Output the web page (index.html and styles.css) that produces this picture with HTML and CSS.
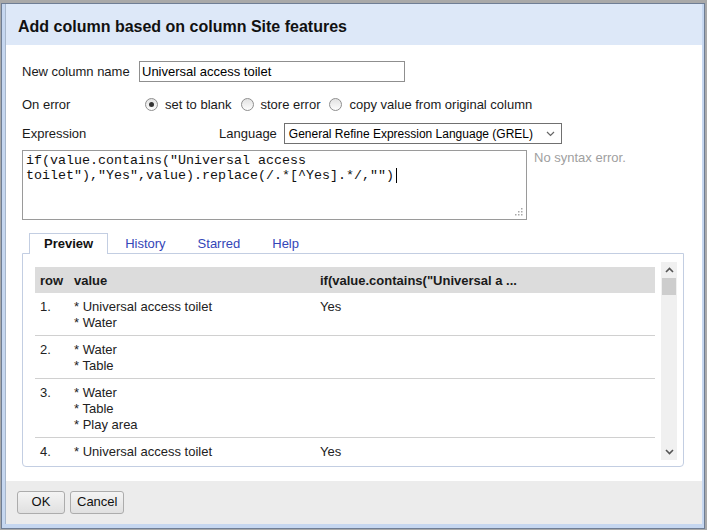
FILE: index.html
```html
<!DOCTYPE html>
<html>
<head>
<meta charset="utf-8">
<link rel="stylesheet" href="styles.css">
</head>
<body>
<div class="dialog">
  <div class="win">
    <div class="hdr">Add column based on column Site features</div>
    <div class="body">
      <div class="row r1">
        <span class="lbl w117">New column name</span>
        <div class="input">Universal access toilet</div>
      </div>
      <div class="row r2">
        <span class="lbl w123">On error</span>
        <span class="radio on"></span><span class="opt">set to blank</span>
        <span class="radio"></span><span class="opt">store error</span>
        <span class="radio"></span><span class="opt">copy value from original column</span>
      </div>
      <div class="row r3">
        <span class="lbl w197">Expression</span>
        <span class="lang">Language</span>
        <div class="select">
          <span class="seltext">General Refine Expression Language (GREL)</span>
          <svg class="chev" width="9" height="6" viewBox="0 0 9 6"><path d="M1 1 L4.5 4.5 L8 1" fill="none" stroke="#666" stroke-width="1.2"/></svg>
        </div>
      </div>
      <div class="exprrow">
        <div class="ta">if(value.contains("Universal access<br>toilet"),"Yes",value).replace(/.*[^Yes].*/,"")<span class="caret"></span>
          <svg class="grip" width="8" height="8" viewBox="0 0 8 8"><g fill="#a8a8a8"><rect x="6" y="0" width="1.5" height="1.5"/><rect x="3" y="3" width="1.5" height="1.5"/><rect x="6" y="3" width="1.5" height="1.5"/><rect x="0" y="6" width="1.5" height="1.5"/><rect x="3" y="6" width="1.5" height="1.5"/><rect x="6" y="6" width="1.5" height="1.5"/></g></svg>
        </div>
        <div class="status">No syntax error.</div>
      </div>
      <div class="tabs">
        <ul class="tablist">
          <li class="tab active">Preview</li>
          <li class="tab">History</li>
          <li class="tab">Starred</li>
          <li class="tab">Help</li>
        </ul>
        <div class="panel">
          <div class="scroll">
            <div class="tablewrap">
              <table class="preview">
                <thead>
                  <tr><th class="c1">row</th><th class="c2">value</th><th class="c3">if(value.contains("Universal a ...</th></tr>
                </thead>
                <tbody>
                  <tr><td>1.</td><td>* Universal access toilet<br>* Water</td><td>Yes</td></tr>
                  <tr><td>2.</td><td>* Water<br>* Table</td><td></td></tr>
                  <tr><td>3.</td><td>* Water<br>* Table<br>* Play area</td><td></td></tr>
                  <tr><td>4.</td><td>* Universal access toilet</td><td>Yes</td></tr>
                </tbody>
              </table>
            </div>
            <div class="sbar">
              <div class="sbtn"><svg width="9" height="6" viewBox="0 0 9 6"><path d="M1 5 L4.5 1.5 L8 5" fill="none" stroke="#555" stroke-width="1.6"/></svg></div>
              <div class="thumb"></div>
              <div class="track"></div>
              <div class="sbtn"><svg width="9" height="6" viewBox="0 0 9 6"><path d="M1 1 L4.5 4.5 L8 1" fill="none" stroke="#555" stroke-width="1.6"/></svg></div>
            </div>
          </div>
        </div>
      </div>
    </div>
    <div class="foot">
      <button class="btn ok">OK</button>
      <button class="btn">Cancel</button>
    </div>
  </div>
</div>
</body>
</html>
```
FILE: styles.css
```css
html, body {
  margin: 0;
  padding: 0;
}
body {
  background: #a9a9a9;
  font-family: "Liberation Sans", Arial, sans-serif;
  font-size: 13px;
  color: #1a1a1a;
  width: 707px;
  height: 530px;
  overflow: hidden;
}
.dialog {
  box-sizing: border-box;
  margin: 3px 0 0 1px;
  width: 704px;
  height: 526px;
  border: 1px solid #6f7e95;
  background: #c6d7f0;
  padding: 0 2px 4px 3px;
}
.win {
  box-sizing: border-box;
  height: 100%;
  border-left: 1px solid #a8b7cb;
  background: #fff;
  display: flex;
  flex-direction: column;
}
.hdr {
  height: 41px;
  box-sizing: border-box;
  background: #dde8f8;
  padding: 14px 0 0 12px;
  font-weight: bold;
  font-size: 16px;
  line-height: 18px;
  color: #111;
}
.body {
  flex: 1;
  padding: 0 18px 0 16px;
}
.row {
  display: flex;
  align-items: center;
}
.r1 { height: 21px; margin-top: 16px; }
.r2 { height: 20px; margin-top: 12px; }
.r3 { height: 21px; margin-top: 9px; }
.lbl { flex: none; }
.w117 { width: 117px; }
.w123 { width: 123px; }
.w197 { width: 197px; }
.input {
  box-sizing: border-box;
  width: 266px;
  height: 21px;
  border: 1px solid #8f8f8f;
  padding: 0 2px;
  line-height: 19px;
  color: #000;
}
.radio {
  box-sizing: border-box;
  width: 13px;
  height: 13px;
  border: 1px solid #8e8e8e;
  border-radius: 50%;
  background: linear-gradient(#e2e2e2, #fdfdfd);
  margin-right: 7px;
  display: flex;
  align-items: center;
  justify-content: center;
  flex: none;
}
.radio.on::after {
  content: "";
  width: 5px;
  height: 5px;
  border-radius: 50%;
  background: #333;
}
.opt { margin-right: 9px; white-space: nowrap; }
.lang { margin-right: 7px; }
.select {
  box-sizing: border-box;
  width: 278px;
  height: 21px;
  border: 1px solid #707070;
  padding: 0 6px 0 4px;
  display: flex;
  align-items: center;
  justify-content: space-between;
  color: #000;
  font-size: 12px;
  white-space: nowrap;
  flex: none;
}
.seltext { white-space: nowrap; }
.chev { display: block; flex: none; }
.exprrow {
  display: flex;
  align-items: flex-start;
  margin-top: 6px;
}
.ta {
  position: relative;
  box-sizing: border-box;
  width: 505px;
  height: 70px;
  border: 1px solid #9a9a9a;
  padding: 2px 3px;
  font-family: "Liberation Mono", "Courier New", monospace;
  font-size: 13.33px;
  line-height: 15px;
  color: #111;
  white-space: nowrap;
}
.caret {
  display: inline-block;
  width: 1px;
  height: 15px;
  background: #000;
  vertical-align: -4px;
  margin-left: 2px;
}
.grip {
  position: absolute;
  right: 3px;
  bottom: 3px;
}
.status {
  margin-left: 7px;
  color: #a0a0a0;
  line-height: 16px;
}
.tabs { margin-top: 13px; }
.tablist {
  list-style: none;
  margin: 0;
  padding: 0 0 0 7px;
  display: flex;
  height: 20px;
  position: relative;
  z-index: 1;
}
.tab {
  box-sizing: border-box;
  height: 21px;
  border: 1px solid transparent;
  border-bottom: none;
  padding: 0 14px;
  margin-right: 2px;
  line-height: 20px;
  color: #3446b8;
}
.tab.active {
  border-color: #c3cee2;
  background: #fff;
  font-weight: bold;
  color: #111;
}
.panel {
  box-sizing: border-box;
  height: 214px;
  border: 1px solid #c3cee2;
  border-radius: 0 0 4px 4px;
  padding: 8px 5px 5px 12px;
}
.scroll {
  display: flex;
  height: 198px;
}
.tablewrap {
  width: 626px;
  height: 198px;
  overflow: hidden;
  padding-top: 5px;
  box-sizing: border-box;
}
.preview {
  width: 620px;
  border-collapse: collapse;
  color: #222;
}
.preview th {
  background: #dcdcdc;
  height: 26px;
  padding: 0 5px;
  text-align: left;
  font-weight: bold;
  color: #1a1a1a;
}
.c1 { width: 24px; }
.c2 { width: 236px; }
.preview td {
  vertical-align: top;
  padding: 6px 5px 4px;
  line-height: 16px;
  border-bottom: 1px solid #d0d0d0;
}
.preview tr:last-child td { border-bottom: none; }
.sbar {
  width: 16px;
  display: flex;
  flex-direction: column;
  background: #f0f0f0;
}
.sbtn {
  height: 16px;
  display: flex;
  align-items: center;
  justify-content: center;
  flex: none;
}
.thumb {
  height: 17px;
  background: #cdcdcd;
  margin: 0 1px;
  flex: none;
}
.track { flex: 1; }
.foot {
  height: 43px;
  box-sizing: border-box;
  background: #ececec;
  padding: 10px 0 0 11px;
  display: flex;
  align-items: flex-start;
  gap: 5px;
}
.btn {
  box-sizing: border-box;
  height: 23px;
  border: 1px solid #acacac;
  border-radius: 3px;
  background: linear-gradient(#f4f4f4, #e0e0e0);
  font-family: "Liberation Sans", Arial, sans-serif;
  font-size: 13px;
  line-height: 18px;
  color: #111;
  padding: 1px 6px 2px;
  margin: 0;
}
.btn.ok { width: 48px; }
```
